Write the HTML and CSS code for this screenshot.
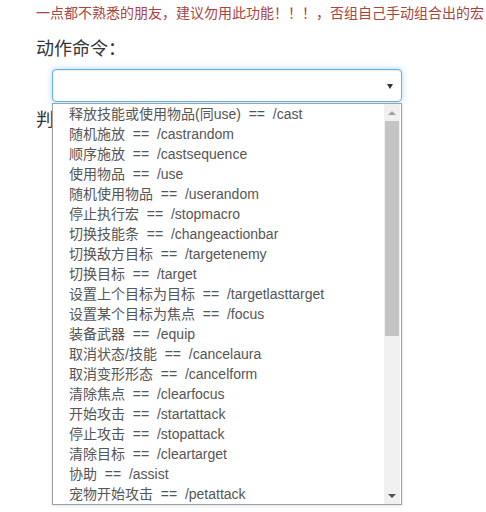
FILE: index.html
```html
<!DOCTYPE html>
<html>
<head>
<meta charset="utf-8">
<link rel="stylesheet" href="styles.css">
</head>
<body>
<div class="page">
  <p class="warn">一点都不熟悉的朋友，建议勿用此功能！！！，否组自己手动组合出的宏</p>
  <h3 class="label">动作命令：</h3>
  <div class="select-wrap">
    <div class="select"><span class="caret"></span></div>
    <div class="dropdown">
      <ul class="options">
        <li>释放技能或使用物品(同use) &nbsp;== &nbsp;/cast</li>
        <li>随机施放 &nbsp;== &nbsp;/castrandom</li>
        <li>顺序施放 &nbsp;== &nbsp;/castsequence</li>
        <li>使用物品 &nbsp;== &nbsp;/use</li>
        <li>随机使用物品 &nbsp;== &nbsp;/userandom</li>
        <li>停止执行宏 &nbsp;== &nbsp;/stopmacro</li>
        <li>切换技能条 &nbsp;== &nbsp;/changeactionbar</li>
        <li>切换敌方目标 &nbsp;== &nbsp;/targetenemy</li>
        <li>切换目标 &nbsp;== &nbsp;/target</li>
        <li>设置上个目标为目标 &nbsp;== &nbsp;/targetlasttarget</li>
        <li>设置某个目标为焦点 &nbsp;== &nbsp;/focus</li>
        <li>装备武器 &nbsp;== &nbsp;/equip</li>
        <li>取消状态/技能 &nbsp;== &nbsp;/cancelaura</li>
        <li>取消变形形态 &nbsp;== &nbsp;/cancelform</li>
        <li>清除焦点 &nbsp;== &nbsp;/clearfocus</li>
        <li>开始攻击 &nbsp;== &nbsp;/startattack</li>
        <li>停止攻击 &nbsp;== &nbsp;/stopattack</li>
        <li>清除目标 &nbsp;== &nbsp;/cleartarget</li>
        <li>协助 &nbsp;== &nbsp;/assist</li>
        <li>宠物开始攻击 &nbsp;== &nbsp;/petattack</li>
      </ul>
      <div class="scrollbar">
        <div class="sb-btn"><span class="tri up"></span></div>
        <div class="sb-thumb"></div>
        <div class="sb-track"></div>
        <div class="sb-btn"><span class="tri down"></span></div>
      </div>
    </div>
  </div>
  <h3 class="label second">判断条件：</h3>
</div>
</body>
</html>
```

FILE: styles.css
```css
html, body {
  margin: 0;
  padding: 0;
  background: #ffffff;
}
body {
  font-family: "Liberation Sans", "Noto Sans CJK SC", sans-serif;
  color: #333;
  width: 486px;
  height: 512px;
  overflow: hidden;
}
.page {
  padding: 3px 0 0 36px;
}
.warn {
  margin: 0;
  font-size: 14px;
  line-height: 20px;
  color: #a94442;
  white-space: nowrap;
}
.label {
  margin: 14px 0 0 0;
  font-size: 18px;
  font-weight: normal;
  line-height: 24px;
  color: #333;
}
.label.second {
  margin-top: 6px;
  width: 16px;
  overflow: hidden;
  white-space: nowrap;
}
.select-wrap {
  position: relative;
  margin: 8px 0 0 16px;
  width: 350px;
}
.select {
  position: relative;
  box-sizing: border-box;
  height: 33px;
  border: 1px solid #66afe9;
  border-radius: 4px;
  box-shadow: inset 0 1px 1px rgba(0,0,0,.075), 0 0 6px rgba(102,175,233,.5);
  background: #fff;
}
.caret {
  position: absolute;
  right: 8px;
  top: 14px;
  width: 0;
  height: 0;
  border-left: 3px solid transparent;
  border-right: 3px solid transparent;
  border-top: 5px solid #333;
}
.dropdown {
  position: absolute;
  left: 0;
  top: 34px;
  width: 350px;
  height: 402px;
  box-sizing: border-box;
  border: 1px solid #a0a0a0;
  border-top-color: #9aa;
  background: #fff;
  display: flex;
  z-index: 5;
  box-shadow: 0 1px 3px rgba(150,180,210,.35);
}
.options {
  list-style: none;
  margin: 0;
  padding: 0 0 0 16px;
  flex: 1;
  overflow: hidden;
}
.options li {
  font-size: 14px;
  line-height: 20px;
  height: 20px;
  color: #555;
  white-space: nowrap;
}
.scrollbar {
  width: 16px;
  margin-right: 1px;
  display: flex;
  flex-direction: column;
  background: #f0f0f0;
}
.sb-btn {
  height: 17px;
  display: flex;
  align-items: center;
  justify-content: center;
  background: #f0f0f0;
}
.tri {
  width: 0;
  height: 0;
  border-left: 4px solid transparent;
  border-right: 4px solid transparent;
}
.tri.up {
  border-bottom: 4px solid #a3a3a3;
}
.tri.down {
  border-top: 4px solid #505050;
}
.sb-thumb {
  height: 215px;
  margin: 0 1px;
  background: #c4c4c4;
}
.sb-track {
  flex: 1;
}
```
